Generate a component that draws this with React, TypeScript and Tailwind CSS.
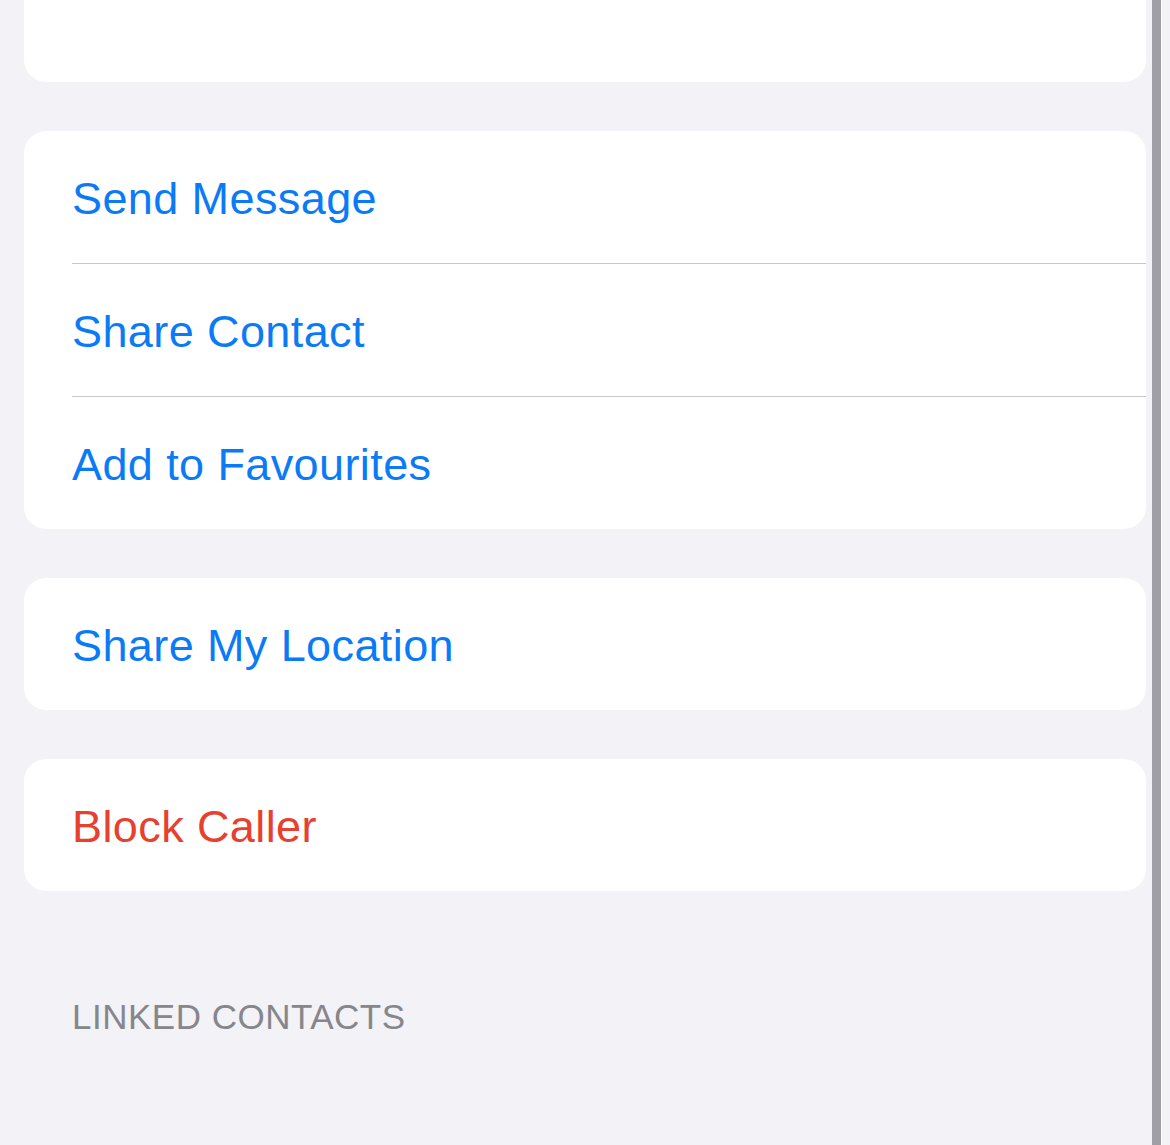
const blue = "text-[#0b7bf5]";

function Row({ label, color = blue }: { label: string; color?: string }) {
  return (
    <div
      className={`flex h-[132px] items-center pl-[48px] pt-[3px] text-[45px] tracking-[0.4px] ${color}`}
    >
      {label}
    </div>
  );
}

function Divider() {
  return <div className="ml-[48px] h-px bg-[#c8c8cc]" />;
}

export default function App() {
  return (
    <div
      className="flex h-[1145px] w-[1170px] overflow-hidden bg-[#f2f2f7]"
      style={{ fontFamily: '"Liberation Sans", Arial, sans-serif' }}
    >
      <div className="flex flex-1 flex-col pl-[24px] pr-[6px]">
        {/* tail of the card above, scrolled off the top */}
        <div className="h-[82px] rounded-b-[22px] bg-white" />

        <div className="mt-[49px] overflow-hidden rounded-[22px] bg-white">
          <Row label="Send Message" />
          <Divider />
          <Row label="Share Contact" />
          <Divider />
          <Row label="Add to Favourites" />
        </div>

        <div className="mt-[49px] rounded-[22px] bg-white">
          <Row label="Share My Location" />
        </div>

        <div className="mt-[49px] rounded-[22px] bg-white">
          <Row label="Block Caller" color="text-[#e8402f]" />
        </div>

        <div className="mt-[108px] pl-[48px] text-[35px] leading-none tracking-[0.5px] text-[#86868b]">
          LINKED CONTACTS
        </div>
      </div>

      {/* window edge */}
      <div className="w-[9px] bg-[#9f9fa5]" />
      <div className="w-px bg-white" />
      <div className="w-[8px]" />
    </div>
  );
}
